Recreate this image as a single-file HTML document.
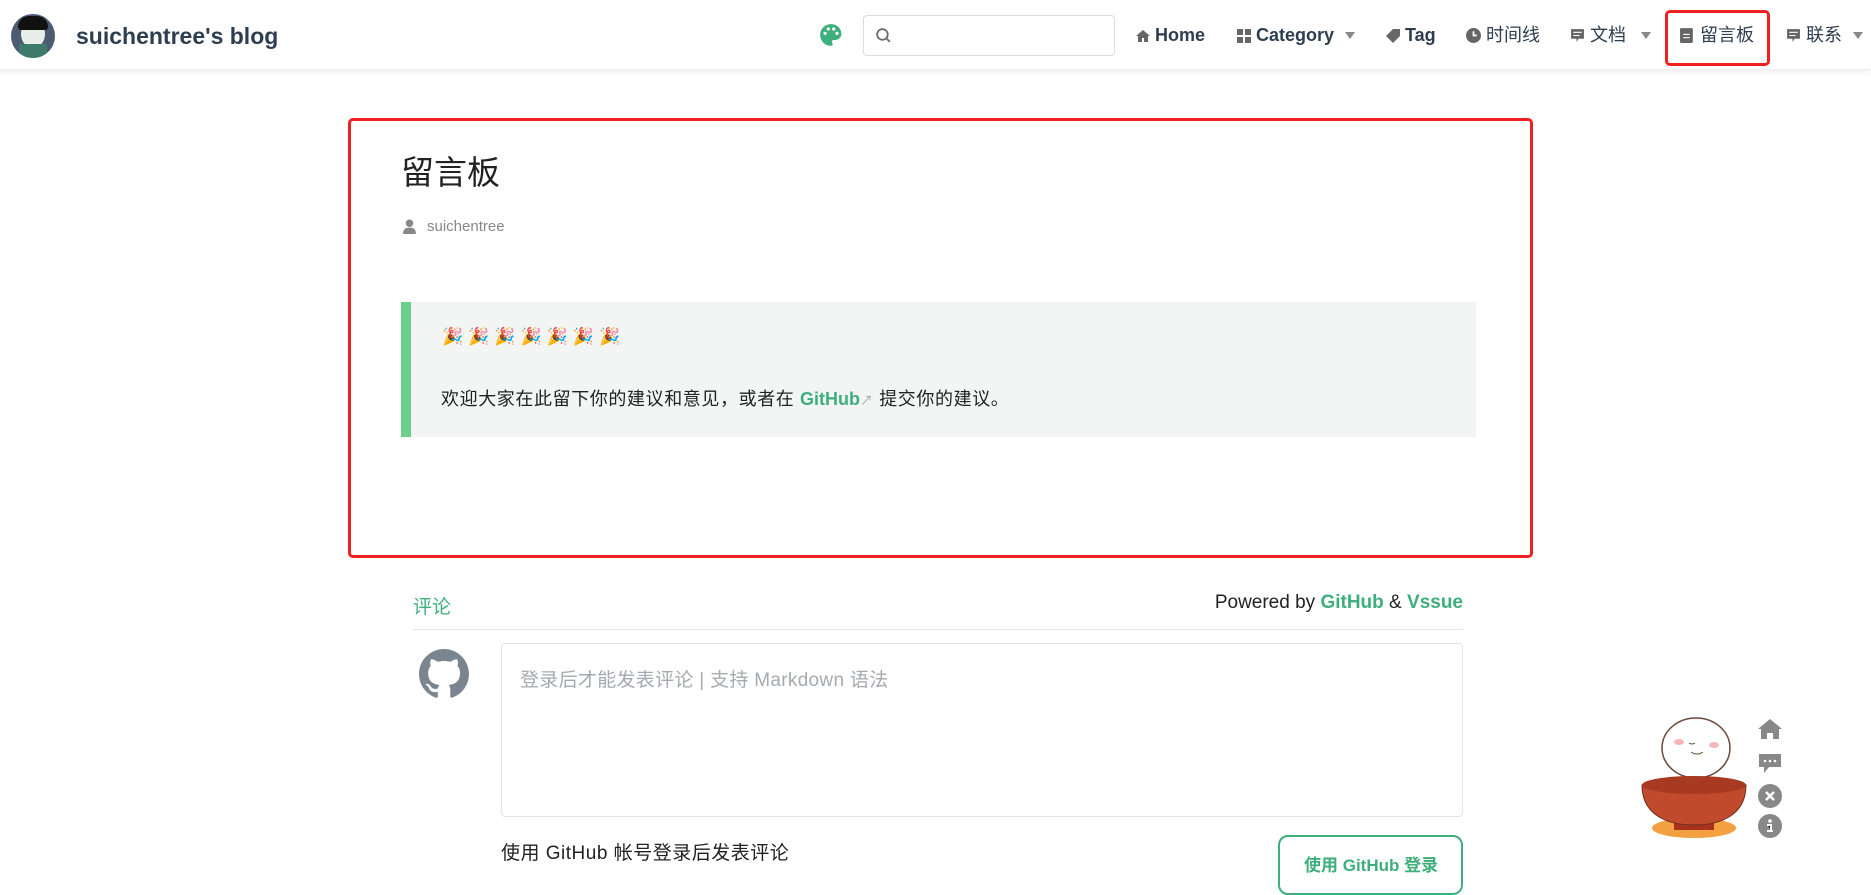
<!DOCTYPE html>
<html><head><meta charset="utf-8"><style>
*{margin:0;padding:0;box-sizing:border-box}
body{width:1871px;height:879px;overflow:hidden;background:#fff;font-family:"Liberation Sans","Noto Sans CJK SC",sans-serif;color:#2c3e50;position:relative}
.abs{position:absolute}
header{position:absolute;left:0;top:0;width:1871px;height:70px;background:#fff;box-shadow:0 2px 6px rgba(0,0,0,.07);border-bottom:1px solid #eee}
.nav{position:absolute;top:24px;font-size:18px;font-weight:600;color:#2c3e50;white-space:nowrap;line-height:22px}
.nav.cn{font-weight:400}
.arr{position:absolute;top:32px;width:0;height:0;border-left:5px solid transparent;border-right:5px solid transparent;border-top:7px solid #888}
.ic{display:inline-block;vertical-align:-2px;margin-right:5px}
</style></head><body>
<header>
<div class="abs" style="left:11px;top:14px;width:44px;height:44px;border-radius:50%;background:#4d5a73;overflow:hidden">
<div class="abs" style="left:10px;top:6px;width:24px;height:28px;border-radius:50%;background:#e8efe8"></div>
<div class="abs" style="left:7px;top:2px;width:30px;height:14px;border-radius:14px 14px 4px 4px;background:#111"></div>
<div class="abs" style="left:8px;top:30px;width:28px;height:16px;background:#3c7a6a"></div>
</div>
<div class="abs" style="left:76px;top:23px;font-size:23px;font-weight:600;color:#2c3e50">suichentree's blog</div>
<svg class="abs" style="left:818px;top:22px" width="26" height="26" viewBox="0 0 24 24"><path fill="#3eaf7c" d="M12 2C6.5 2 2 6.5 2 12s4.5 10 10 10c1 0 1.6-.7 1.6-1.6 0-.4-.2-.8-.4-1.1-.3-.3-.4-.7-.4-1.1 0-.9.7-1.6 1.6-1.6H16c3 0 5.6-2.5 5.6-5.6C21.6 6 17.3 2 12 2zM6.5 12a1.5 1.5 0 110-3 1.5 1.5 0 010 3zm3-4a1.5 1.5 0 110-3 1.5 1.5 0 010 3zm5 0a1.5 1.5 0 110-3 1.5 1.5 0 010 3zm3 4a1.5 1.5 0 110-3 1.5 1.5 0 010 3z"/></svg>
<div class="abs" style="left:863px;top:15px;width:252px;height:41px;border:1px solid #ddd;border-radius:4px"></div>
<svg class="abs" style="left:875px;top:27px" width="17" height="17" viewBox="0 0 16 16"><circle cx="7" cy="7" r="5" fill="none" stroke="#666" stroke-width="1.6"/><path d="M10.5 10.5l3.5 3.5" stroke="#666" stroke-width="1.6"/></svg>
<div class="nav" style="left:1136px"><svg class="ic" width="14" height="14" viewBox="0 0 14 14"><path fill="#666" d="M7 1L0 7h2v6h4V9h2v4h4V7h2z"/></svg>Home</div>
<div class="nav" style="left:1237px"><svg class="ic" width="14" height="14" viewBox="0 0 14 14"><path fill="#666" d="M0 0h6v6H0zM8 0h6v6H8zM0 8h6v6H0zM8 8h6v6H8z"/></svg>Category</div>
<div class="arr" style="left:1345px"></div>
<div class="nav" style="left:1386px"><svg class="ic" width="14" height="14" viewBox="0 0 14 14"><path fill="#666" d="M7 0h7v7l-7 7-7-7z"/></svg>Tag</div>
<div class="nav cn" style="left:1466px"><svg class="ic" width="15" height="15" viewBox="0 0 14 14"><circle cx="7" cy="7" r="7" fill="#666"/><path d="M7 3v4h3" stroke="#fff" stroke-width="1.6" fill="none"/></svg>时间线</div>
<div class="nav cn" style="left:1570px"><svg class="ic" width="15" height="15" viewBox="0 0 14 14"><path fill="#666" d="M1 1h12v9H8l-2 3V10H1z"/><path d="M3 4h8M3 7h6" stroke="#fff"/></svg>文档</div>
<div class="arr" style="left:1641px"></div>
<div class="abs" style="left:1665px;top:10px;width:105px;height:56px;border:3px solid #f02020;border-radius:5px"></div>
<div class="nav cn" style="left:1680px"><svg class="ic" width="15" height="16" viewBox="0 0 14 15"><rect x="0" y="1" width="12" height="14" rx="1" fill="#666"/><path d="M3 7h6M3 10h6" stroke="#fff"/></svg>留言板</div>
<div class="nav cn" style="left:1786px"><svg class="ic" width="15" height="15" viewBox="0 0 14 14"><path fill="#666" d="M1 1h12v9H8l-2 3V10H1z"/><path d="M3 4h8M3 7h6" stroke="#fff"/></svg>联系</div>
<div class="arr" style="left:1853px"></div>
</header>

<div class="abs" style="left:348px;top:118px;width:1185px;height:440px;border:3px solid #f02020;border-radius:5px"></div>
<div class="abs" style="left:401px;top:146px;font-size:33px;color:#222">留言板</div>
<svg class="abs" style="left:403px;top:219px" width="13" height="15" viewBox="0 0 12 14"><circle cx="6" cy="4" r="3.5" fill="#888"/><path d="M0 14c0-5 2.5-6 6-6s6 1 6 6z" fill="#888"/></svg>
<div class="abs" style="left:427px;top:218px;font-size:15px;color:#888">suichentree</div>
<div class="abs" style="left:401px;top:302px;width:1075px;height:135px;background:#f3f5f4;border-left:10px solid #6ccf8c"></div>
<div class="abs" style="left:442px;top:327px;font-size:17px;letter-spacing:5px;font-family:'Noto Color Emoji','DejaVu Sans',sans-serif">🎉🎉🎉🎉🎉🎉🎉</div>
<div class="abs" style="left:441px;top:385px;font-size:18px;color:#222;letter-spacing:0.6px">欢迎大家在此留下你的建议和意见，或者在 <span style="color:#3eaf7c;font-weight:700;letter-spacing:0">GitHub</span><span style="color:#aaa;font-size:13px">↗</span> 提交你的建议。</div>

<div class="abs" style="left:413px;top:592px;font-size:19px;color:#3eaf7c">评论</div>
<div class="abs" style="right:408px;top:592px;font-size:19px;color:#222">Powered by <span style="color:#3eaf7c;font-weight:700">GitHub</span> &amp; <span style="color:#3eaf7c;font-weight:700">Vssue</span></div>
<div class="abs" style="left:413px;top:629px;width:1050px;height:1px;background:#e6e6e6"></div>
<svg class="abs" style="left:419px;top:649px" width="50" height="50" viewBox="0 0 16 16"><path fill="#7b8590" d="M8 0C3.58 0 0 3.58 0 8c0 3.54 2.29 6.530 5.47 7.59.4.07.55-.17.55-.38v-1.5c-2.01.37-2.53-.49-2.69-.94-.09-.23-.48-.94-.82-1.13-.28-.15-.68-.52-.01-.53.63-.01 1.08.58 1.230.82.72 1.21 1.87.87 2.33.66.07-.52.28-.87.51-1.070-1.78-.2-3.64-.89-3.640-3.95 0-.87.31-1.590.82-2.15-.08-.2-.36-1.02.08-2.12 0 0 .67-.21 2.2.82.64-.18 1.32-.27 2-.27.68 0 1.36.09 2 .27 1.53-1.04 2.2-.82 2.2-.82.44 1.1.16 1.92.08 2.12.51.56.82 1.27.82 2.15 0 3.07-1.87 3.75-3.65 3.95.29.25.54.73.54 1.48v2.2c0 .21.15.46.55.38A8.01 8.01 0 0016 8c0-4.42-3.58-8-8-8z"/></svg>
<div class="abs" style="left:501px;top:643px;width:962px;height:174px;border:1px solid #e4e4e4;border-radius:4px"></div>
<div class="abs" style="left:520px;top:665px;font-size:19px;color:#a4aab0;letter-spacing:0.3px">登录后才能发表评论 | 支持 Markdown 语法</div>
<div class="abs" style="left:501px;top:838px;font-size:19px;color:#222;letter-spacing:0.5px">使用 GitHub 帐号登录后发表评论</div>
<div class="abs" style="left:1278px;top:835px;width:185px;height:60px;border:2px solid #3eaf7c;border-radius:10px"></div>
<div class="abs" style="left:1304px;top:851px;font-size:17px;font-weight:700;color:#3eaf7c">使用 GitHub 登录</div>

<svg class="abs" style="left:1634px;top:700px" width="116" height="145" viewBox="0 0 116 145">
<ellipse cx="60" cy="128" rx="42" ry="10" fill="#f2a040"/>
<path d="M40 118h40v12H40z" fill="#a8321e"/>
<ellipse cx="62" cy="48" rx="34" ry="30" fill="#fff" stroke="#6a4a3a" stroke-width="1.5"/>
<path d="M8 85c0 30 25 40 52 40s52-10 52-40z" fill="#c24a2c" stroke="#6a3020"/>
<ellipse cx="60" cy="85" rx="52" ry="9" fill="#a83a22"/>
<ellipse cx="45" cy="42" rx="5" ry="3" fill="#f7b6b6"/><ellipse cx="80" cy="45" rx="5" ry="3" fill="#f7b6b6"/>
<path d="M55 43q3 2 6 0M57 52q6 4 12 0" stroke="#553" fill="none"/>
</svg>
<svg class="abs" style="left:1758px;top:718px" width="24" height="22" viewBox="0 0 24 22"><path fill="#888" d="M12 1L0 11h3v10h6v-6h6v6h6V11h3z"/></svg>
<svg class="abs" style="left:1759px;top:754px" width="22" height="20" viewBox="0 0 22 20"><path fill="#888" d="M0 0h22v13H10l-5 6v-6H0z"/><circle cx="6" cy="7" r="1.3" fill="#fff"/><circle cx="11" cy="7" r="1.3" fill="#fff"/><circle cx="16" cy="7" r="1.3" fill="#fff"/></svg>
<svg class="abs" style="left:1758px;top:784px" width="24" height="24" viewBox="0 0 24 24"><circle cx="12" cy="12" r="12" fill="#888"/><path d="M8 8l8 8M16 8l-8 8" stroke="#fff" stroke-width="2.5"/></svg>
<svg class="abs" style="left:1758px;top:814px" width="24" height="24" viewBox="0 0 24 24"><circle cx="12" cy="12" r="12" fill="#888"/><circle cx="12" cy="7" r="1.8" fill="#fff"/><path d="M9 11h4v6h2M9 17h6" stroke="#fff" stroke-width="2"/></svg>
</body></html>
